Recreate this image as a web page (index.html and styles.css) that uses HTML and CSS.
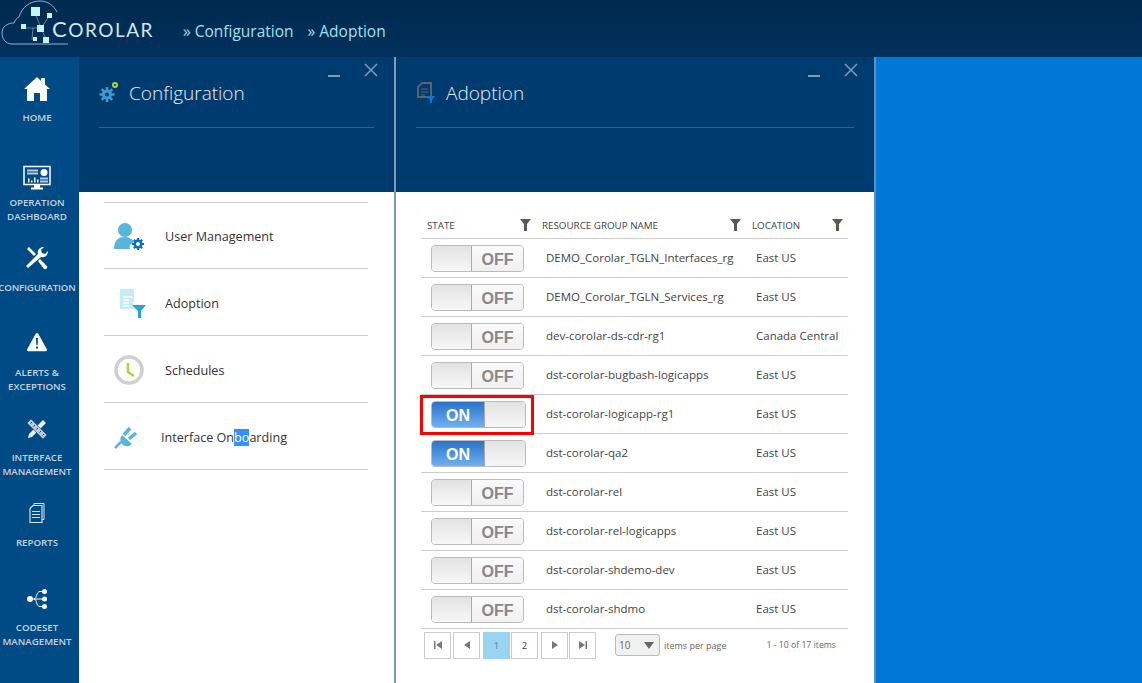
FILE: index.html
```html
<!DOCTYPE html>
<html lang="en">
<head>
    <meta charset="UTF-8">
    <meta name="viewport" content="width=device-width, initial-scale=1.0">
    <title>Corolar - Adoption</title>
    <link rel="stylesheet" href="styles.css">
</head>
<body>
    <header class="topbar">
        <div class="logo">
            <svg class="logo-mark" width="70" height="50" viewBox="0 0 70 50">
                <path d="M68 44H12C5 44 2 38 2 33c0-6 5-10 12-10 1-3 3-5 5-6C22 7 30 1 40 1c8 0 14 5 17 11" fill="none" stroke="#8fb3c9" stroke-width="1"/>
                <path d="M24 28h17M41 28l-6-15M41 28l5 11M41 28l9-13M33 28l-1 12" stroke="#7fa8c0" stroke-width=".7" fill="none"/>
                <rect x="31" y="7" width="9" height="9" fill="#c4f5ef"/>
                <rect x="47" y="13" width="5" height="5" fill="#c4f5ef"/>
                <rect x="21" y="24" width="5" height="5" fill="#c4f5ef"/>
                <rect x="37" y="25" width="7" height="7" fill="#c4f5ef"/>
                <rect x="33" y="37" width="4" height="4" fill="#c4f5ef"/>
                <rect x="43" y="37" width="6" height="6" fill="#c4f5ef"/>
            </svg>
            <span class="logo-text"><span class="logo-c">C</span>OROLAR</span>
        </div>
        <nav class="crumbs">
            <a class="crumb">» Configuration</a>
            <a class="crumb">» Adoption</a>
        </nav>
    </header>

    <div class="main">
        <aside class="sidebar">
            <div class="side-item">
                <svg width="28" height="26" viewBox="0 0 28 26"><path d="M14 1L1 13h3v12h7v-8h6v8h7V13h3l-5-4.500V2h-4v3z" fill="#fff"/></svg>
                <span class="side-label">HOME</span>
            </div>
            <div class="side-item side-item-tight">
                <svg width="28" height="25" viewBox="0 0 28 25"><rect x="1" y="1" width="26" height="18" fill="#004b87" stroke="#fff" stroke-width="1.500"/><path d="M4 4h11v2H4zM4 7h11v2H4zM17 12h8v2h-8zM17 15h8v2h-8z" fill="#b9c9d8"/><circle cx="21" cy="7" r="3.500" fill="#fff"/><path d="M5 17v-4h1.500v4zM8 17v-2h1.500v2zM11 17v-5h1.500v5zM14 17v-3h1.500v3z" fill="#fff"/><path d="M11 19h6v3h3v2H8v-2h3z" fill="#fff"/></svg>
                <span class="side-label">OPERATION<br>DASHBOARD</span>
            </div>
            <div class="side-item side-item-config">
                <svg width="24" height="24" viewBox="0 0 24 24"><path d="M3 22l-2-2L13 8c-1-3 1-7 6-7l-3 3 1 3 3 1 3-3c0 5-4 7-7 6z" fill="#fff"/><path d="M2 3l2-2 7 7-2 2zM13 15l2-2 7 7c1 2-1 4-3 3z" fill="#fff"/></svg>
                <span class="side-label side-label-wide">CONFIGURATION</span>
            </div>
            <div class="side-item side-item-alerts">
                <svg width="22" height="20" viewBox="0 0 22 20"><path d="M11 1c.6 0 1 .3 1.300.8l8.500 15.500c.5 1-.1 1.900-1.200 1.900H2.400c-1.100 0-1.700-.9-1.200-1.900L9.700 1.800C10 1.300 10.400 1 11 1z" fill="#fff"/><path d="M10 6h2l-.3 7h-1.400zM10 14.500h2v2h-2z" fill="#004b87"/></svg>
                <span class="side-label">ALERTS &amp;<br>EXCEPTIONS</span>
            </div>
            <div class="side-item">
                <svg width="20" height="20" viewBox="0 0 20 20"><path d="M16 1l3 3L5 18l-4 1 1-4z" fill="#e8edf2"/><path d="M4 0L0 4l16 16 4-4z" fill="#bcc8d4" stroke="#004b87" stroke-width=".6"/><path d="M5 3L3.500 4.500M8 6L6.500 7.500M11 9l-1.500 1.500M14 12l-1.500 1.500M17 15l-1.500 1.500" stroke="#004b87" stroke-width="1"/></svg>
                <span class="side-label">INTERFACE<br>MANAGEMENT</span>
            </div>
            <div class="side-item">
                <svg width="16" height="21" viewBox="0 0 16 21"><path d="M5 3V1h10v16h-2" fill="none" stroke="#d8e0e8"/><path d="M4 3h9v17H1V6z" fill="none" stroke="#d8e0e8" stroke-width="1.200"/><path d="M3 9h8M3 12h8M3 15h8" stroke="#d8e0e8" stroke-width="1.200"/></svg>
                <span class="side-label side-label-low">REPORTS</span>
            </div>
            <div class="side-item">
                <svg width="21" height="21" viewBox="0 0 21 21"><circle cx="3" cy="10.500" r="3" fill="#fff"/><circle cx="17.500" cy="3" r="2.500" fill="#fff"/><circle cx="17.500" cy="10.500" r="2.500" fill="#fff"/><circle cx="17.500" cy="18" r="2.500" fill="#fff"/><path d="M3 10.500h14M7 10.500c3 0 2-7.500 6-7.500h4M7 10.500c3 0 2 7.500 6 7.500h4" fill="none" stroke="#fff" stroke-width="1"/></svg>
                <span class="side-label">CODESET<br>MANAGEMENT</span>
            </div>
        </aside>

        <section class="panel panel-config">
            <div class="panel-head">
                <div class="panel-controls">
                    <span class="ctl-min"></span>
                    <svg width="14" height="14" viewBox="0 0 14 14"><path d="M1 1l12 12M13 1L1 13" stroke="#7f9ab5" stroke-width="1.500"/></svg>
                </div>
                <div class="panel-title">
                    <svg width="20" height="22" viewBox="0 0 20 22"><path d="M8 6v15M0.500 13.500h15M2.700 8.200l10.600 10.600M13.300 8.200L2.700 18.800" stroke="#3f9bd0" stroke-width="2.500"/><circle cx="8" cy="13.500" r="5" fill="#3f9bd0"/><circle cx="8" cy="13.500" r="2" fill="#003b6f"/><circle cx="16" cy="4" r="2" fill="none" stroke="#b5d334" stroke-width="2"/></svg>
                    <h2>Configuration</h2>
                </div>
            </div>
            <ul class="menu">
                <li class="menu-item">
                    <svg class="menu-icon" width="32" height="30" viewBox="0 0 32 30"><circle cx="11" cy="8" r="7" fill="#58b4da"/><path d="M0 27c0-8 4-12 10-12 5 0 9 2 10 5-4 2-5 5-4 7z" fill="#58b4da"/><path d="M24 16v12M18 22h12M19.800 17.800l8.400 8.400M28.200 17.800l-8.400 8.400" stroke="#0a6fc2" stroke-width="2.200"/><circle cx="24" cy="22" r="4.500" fill="#0a6fc2"/><circle cx="24" cy="22" r="2" fill="#fff"/></svg>
                    <span>User Management</span>
                </li>
                <li class="menu-item">
                    <svg class="menu-icon" width="32" height="30" viewBox="0 0 32 30"><path d="M6 1h14v13h-2l4 7H6z" fill="#c4ecfb"/><path d="M9 9h9M9 12h6M9 15h6M9 18h6" stroke="#fff" stroke-width="1.500"/><path d="M18 17h14l-5 6v7h-3v-7z" fill="#2aa2dc"/></svg>
                    <span>Adoption</span>
                </li>
                <li class="menu-item">
                    <svg class="menu-icon" width="32" height="30" viewBox="0 0 32 30"><circle cx="15" cy="15" r="13" fill="#fff" stroke="#cfcfcf" stroke-width="3.500"/><path d="M14 8v9l6 4" fill="none" stroke="#b5d334" stroke-width="2.500"/></svg>
                    <span>Schedules</span>
                </li>
                <li class="menu-item menu-item-tight">
                    <svg class="menu-icon" width="28" height="26" viewBox="0 0 28 26"><path d="M1 24l6-6" stroke="#58b4da" stroke-width="2.500"/><path d="M8 11l10 9c-3 3-7 3-9.500 .5C6 18 5.500 14 8 11z" fill="#58b4da"/><path d="M10 11l6-7M15 15l7-6" stroke="#58b4da" stroke-width="3.500"/></svg>
                    <span>Interface On<span class="selected-text">bo</span>arding</span>
                </li>
            </ul>
        </section>

        <section class="panel panel-adoption">
            <div class="panel-head">
                <div class="panel-controls">
                    <span class="ctl-min"></span>
                    <svg width="14" height="14" viewBox="0 0 14 14"><path d="M1 1l12 12M13 1L1 13" stroke="#7f9ab5" stroke-width="1.500"/></svg>
                </div>
                <div class="panel-title">
                    <svg width="20" height="22" viewBox="0 0 20 22"><path d="M2 6l4-4h9v14H2z" fill="none" stroke="#5c6468" stroke-width="2"/><path d="M5 8h7M5 11h7M5 14h4" stroke="#5c6468" stroke-width="1.200"/><path d="M10 15h9l-3 4v3h-2v-3z" fill="#0a7ad0"/></svg>
                    <h2>Adoption</h2>
                </div>
            </div>
            <div class="grid-wrap">
                <table class="grid">
                    <colgroup><col class="col-state"><col class="col-name"><col class="col-loc"></colgroup>
                    <thead>
                        <tr>
                            <th><div class="th-in">STATE<svg class="filter" width="11" height="12" viewBox="0 0 11 12"><path d="M0 0h11L7 5v7H4V5z"/></svg></div></th>
                            <th><div class="th-in">RESOURCE GROUP NAME<svg class="filter" width="11" height="12" viewBox="0 0 11 12"><path d="M0 0h11L7 5v7H4V5z"/></svg></div></th>
                            <th><div class="th-in">LOCATION<svg class="filter" width="11" height="12" viewBox="0 0 11 12"><path d="M0 0h11L7 5v7H4V5z"/></svg></div></th>
                        </tr>
                    </thead>
                    <tbody>
                        <tr><td><div class="switch off"><span class="knob"></span><span class="lbl">OFF</span></div></td><td>DEMO_Corolar_TGLN_Interfaces_rg</td><td>East US</td></tr>
                        <tr><td><div class="switch off"><span class="knob"></span><span class="lbl">OFF</span></div></td><td>DEMO_Corolar_TGLN_Services_rg</td><td>East US</td></tr>
                        <tr><td><div class="switch off"><span class="knob"></span><span class="lbl">OFF</span></div></td><td>dev-corolar-ds-cdr-rg1</td><td>Canada Central</td></tr>
                        <tr><td><div class="switch off"><span class="knob"></span><span class="lbl">OFF</span></div></td><td>dst-corolar-bugbash-logicapps</td><td>East US</td></tr>
                        <tr><td class="marked"><div class="switch on"><span class="lbl">ON</span><span class="knob"></span></div></td><td>dst-corolar-logicapp-rg1</td><td>East US</td></tr>
                        <tr><td><div class="switch on"><span class="lbl">ON</span><span class="knob"></span></div></td><td>dst-corolar-qa2</td><td>East US</td></tr>
                        <tr><td><div class="switch off"><span class="knob"></span><span class="lbl">OFF</span></div></td><td>dst-corolar-rel</td><td>East US</td></tr>
                        <tr><td><div class="switch off"><span class="knob"></span><span class="lbl">OFF</span></div></td><td>dst-corolar-rel-logicapps</td><td>East US</td></tr>
                        <tr><td><div class="switch off"><span class="knob"></span><span class="lbl">OFF</span></div></td><td>dst-corolar-shdemo-dev</td><td>East US</td></tr>
                        <tr><td><div class="switch off"><span class="knob"></span><span class="lbl">OFF</span></div></td><td>dst-corolar-shdmo</td><td>East US</td></tr>
                    </tbody>
                </table>
                <div class="pager">
                    <span class="page-btn"><svg width="8" height="8" viewBox="0 0 8 8"><path d="M0 0h1.500v8H0zM8 0v8L2 4z"/></svg></span>
                    <span class="page-btn"><svg width="6" height="8" viewBox="0 0 6 8"><path d="M6 0v8L0 4z"/></svg></span>
                    <span class="page-btn page-active">1</span>
                    <span class="page-btn page-num">2</span>
                    <span class="page-btn"><svg width="6" height="8" viewBox="0 0 6 8"><path d="M0 0v8l6-4z"/></svg></span>
                    <span class="page-btn"><svg width="8" height="8" viewBox="0 0 8 8"><path d="M0 0v8l6-4zM6.500 0H8v8H6.500z"/></svg></span>
                    <div class="page-size"><span>10</span><i class="caret"></i></div>
                    <span class="per-page">items per page</span>
                    <span class="page-info">1 - 10 of 17 items</span>
                </div>
            </div>
        </section>
        <div class="desk"></div>
    </div>
</body>
</html>
```

FILE: styles.css
```css
*, *::after {
    box-sizing: border-box;
}

html, body {
    margin: 0;
    padding: 0;
    height: 683px;
    overflow: hidden;
}

body {
    font-family: "Open Sans", "Noto Sans", sans-serif;
    font-size: 12px;
    color: #333;
    background-color: #0078d7;
}

/* top bar */
.topbar {
    height: 57px;
    display: flex;
    align-items: flex-start;
    background: linear-gradient(#002a50, #00305c);
}

.logo {
    width: 183px;
    height: 57px;
    position: relative;
}

.logo-mark {
    display: block;
}

.logo-text {
    position: absolute;
    left: 52px;
    top: 17px;
    font-family: Lato, sans-serif;
    font-size: 19px;
    font-weight: 400;
    letter-spacing: 1.500px;
    line-height: 24px;
    color: #d5e6ea;
}

.logo-c {
    font-size: 22px;
}

.crumbs {
    display: flex;
    gap: 14px;
    padding-top: 20px;
}

.crumb {
    font-size: 15.500px;
    line-height: 22px;
    color: #9fe2f5;
}

/* main row */
.main {
    display: flex;
    height: 626px;
}

.sidebar {
    width: 79px;
    flex: none;
    background-color: #004a85;
    display: grid;
    grid-template-columns: 74px;
    grid-template-rows: 89px 80px 84px 87px 84px 86px 36px;
    padding-top: 18px;
}

.side-item {
    display: flex;
    flex-direction: column;
    align-items: center;
    color: #fff;
    height: 70px;
}

.side-item svg {
    height: 28px;
    flex: none;
}

.side-label {
    margin-top: 8px;
    font-size: 9.700px;
    font-weight: 600;
    line-height: 14px;
    text-align: center;
    color: #c5d3de;
    white-space: nowrap;
}

.side-item-tight .side-label {
    margin-top: 4px;
}

.side-item-config .side-label {
    margin-top: 9px;
}

.side-item-alerts .side-label {
    margin-top: 10px;
}

.side-label-low {
    margin-top: 9px;
}

.side-label-wide {
    letter-spacing: -.2px;
}

/* panels */
.panel {
    flex: none;
    background-color: #fff;
    border-right: 2px solid #7f9ab5;
}

.panel-config {
    width: 317px;
}

.panel-adoption {
    width: 480px;
    border-right-color: #5e8fc0;
}

.panel-head {
    height: 135px;
    position: relative;
    padding: 20px 20px 0;
    background-color: #003b6f;
}

.panel-title {
    display: flex;
    align-items: flex-start;
    gap: 10px;
    height: 51px;
    border-bottom: 1px solid #33608c;
    color: #e6eef4;
}

.panel-title svg {
    margin-top: 4px;
    flex: none;
}

.panel-title h2 {
    margin: 0;
    font-size: 19px;
    font-weight: 300;
    line-height: 32px;
}

.panel-controls {
    position: absolute;
    right: 16px;
    top: 6px;
    display: flex;
    align-items: center;
    gap: 24px;
}

.ctl-min {
    width: 12px;
    height: 2px;
    margin-top: 12px;
    background-color: #7f9ab5;
}

/* config menu */
.menu {
    list-style: none;
    margin: 10px 26px 0 25px;
    padding: 0;
    border-top: 1px solid #ccc;
}

.menu-item {
    height: 67px;
    display: flex;
    align-items: center;
    padding: 2px 0 0 10px;
    font-size: 12.600px;
    border-bottom: 1px solid #ccc;
    color: #333;
}

.menu-item:first-child {
    height: 66px;
}

.menu-icon {
    flex: none;
    margin-right: 19px;
}

.selected-text {
    background-color: #3390ff;
    color: #fff;
}

/* adoption grid */
.grid-wrap {
    padding: 25px 26px 0 25px;
}

.grid {
    width: 427px;
    border-collapse: collapse;
    table-layout: fixed;
}

.col-state {
    width: 115px;
}

.col-name {
    width: 210px;
}

.col-loc {
    width: 102px;
}

.grid th {
    height: 21px;
    padding: 0 0 4px;
    font-size: 9.800px;
    font-weight: 400;
    text-align: left;
    color: #444;
    border-bottom: 1px solid #ccc;
}

.th-in {
    display: flex;
    justify-content: space-between;
    align-items: center;
    padding: 0 5px 0 6px;
}

.filter {
    fill: #5f5750;
}

.grid td {
    height: 39px;
    padding: 0 4px 0 10px;
    font-size: 11.500px;
    color: #444;
    border-bottom: 1px solid #ccc;
    white-space: nowrap;
}

.grid td:first-child {
    padding-top: 1px;
}

.marked {
    position: relative;
}

.marked::after {
    content: "";
    position: absolute;
    left: -1px;
    top: 0;
    width: 114px;
    height: 40px;
    border: 3px solid #f00;
}

.switch {
    display: flex;
    height: 27px;
    border: 1px solid #bbb;
    border-radius: 4px;
    font-family: "Liberation Sans", Arial, sans-serif;
    font-size: 16px;
    font-weight: 700;
    line-height: 28px;
    overflow: hidden;
}

.switch.off {
    width: 93px;
}

.switch.on {
    width: 95px;
}

.knob {
    background: linear-gradient(#e2e2e2, #f7f7f7);
    border: 1px solid #aaa;
    border-width: 0 1px;
}

.off .knob {
    width: 40px;
    border-left: 0;
}

.on .knob {
    width: 41px;
    border-right: 0;
}

.lbl {
    flex: 1;
    text-align: center;
}

.off .lbl {
    color: #888;
    background: linear-gradient(#fafafa, #f0f0f0);
}

.on .lbl {
    color: #fff;
    background: linear-gradient(#2a73c8, #6fb0f0);
}

/* pager */
.pager {
    display: flex;
    align-items: center;
    margin: 3px 0 0 3px;
    color: #666;
}

.page-btn {
    width: 27px;
    height: 27px;
    margin-right: 2px;
    display: flex;
    align-items: center;
    justify-content: center;
    border: 1px solid #ccc;
    font-size: 9.500px;
    color: #444;
    fill: #777;
}

.page-btn:nth-child(2), .page-btn:nth-child(4) {
    margin-right: 3px;
}

.page-btn:nth-child(3), .page-btn:nth-child(5) {
    margin-right: 1px;
}

.page-active {
    background-color: #9bd3f2;
    border-color: #9bd3f2;
    color: #5a7d90;
}

.page-size {
    width: 45px;
    height: 22px;
    margin-left: 17px;
    padding: 0 5px 0 3px;
    display: flex;
    justify-content: space-between;
    align-items: center;
    border: 1px solid #bbb;
    border-radius: 3px;
    background-color: #f1f1f1;
    font-size: 10px;
}

.caret {
    width: 0;
    height: 0;
    border-left: 5px solid transparent;
    border-right: 5px solid transparent;
    border-top: 7px solid #666;
}

.per-page {
    margin-left: 4px;
    font-size: 9px;
    white-space: nowrap;
}

.page-info {
    margin-left: 40px;
    font-size: 8.700px;
    white-space: nowrap;
}

.desk {
    flex: 1;
    background-color: #0078d7;
}
```
